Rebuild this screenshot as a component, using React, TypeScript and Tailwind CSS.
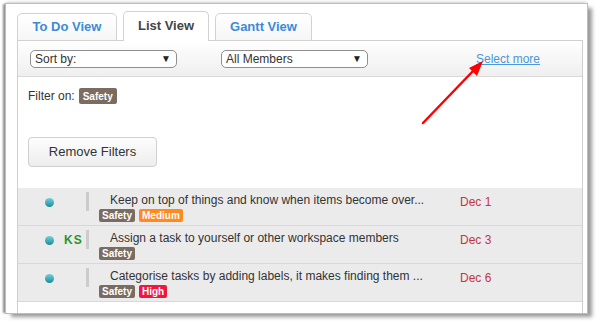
import React from "react";

const font = { fontFamily: '"Liberation Sans", Arial, sans-serif' };

function Badge({ label, color, big }: { label: string; color: string; big?: boolean }) {
  return (
    <span
      className={`inline-flex items-center justify-center rounded-[2px] font-bold text-white text-[10px] ${
        big ? "h-[16px] px-[4px]" : "h-[13px] px-[3px] leading-[13px]"
      } ${color}`}
    >
      {label}
    </span>
  );
}

function Select({ label }: { label: string }) {
  return (
    <div className="flex h-[18px] w-[147px] items-center justify-between rounded-[5px] border border-[#8f8f8f] bg-white pl-[4px] pr-[5px] text-[12px] text-[#333]">
      <span>{label}</span>
      <span className="text-[10px] leading-none text-[#222]">▼</span>
    </div>
  );
}

type Row = {
  text: string;
  who?: string;
  date: string;
  badges: { label: string; color: string }[];
};

const rows: Row[] = [
  {
    text: "Keep on top of things and know when items become over...",
    date: "Dec 1",
    badges: [
      { label: "Safety", color: "bg-[#7b6c62]" },
      { label: "Medium", color: "bg-[#ff8a1f]" },
    ],
  },
  {
    text: "Assign a task to yourself or other workspace members",
    who: "KS",
    date: "Dec 3",
    badges: [{ label: "Safety", color: "bg-[#7b6c62]" }],
  },
  {
    text: "Categorise tasks by adding labels, it makes finding them ...",
    date: "Dec 6",
    badges: [
      { label: "Safety", color: "bg-[#7b6c62]" },
      { label: "High", color: "bg-[#f0163c]" },
    ],
  },
];

export default function App() {
  return (
    <div className="relative h-[322px] w-[600px] overflow-hidden bg-white pl-[6px] pt-[4px]" style={font}>
      <div className="flex h-[309px] w-[581px] flex-col bg-white pl-[11px] pr-[4px] pt-[7px] shadow-[0_0_0_1px_#bdbdbd,-3px_0_2px_#8e8e8e,5px_4px_4px_#999999,0_-2px_3px_#d6d6d6]">
        {/* Tabs */}
        <div className="relative z-10 -mb-px flex items-end gap-[6px]">
          <div className="flex h-[28px] w-[100px] items-center justify-center rounded-t-[5px] border border-[#d2d2d2] bg-linear-to-b from-white to-[#f6f6f6] text-[13px] font-bold text-[#3c8bd8]">
            To Do View
          </div>
          <div className="flex h-[30px] w-[86px] items-center justify-center rounded-t-[5px] border border-b-0 border-[#d2d2d2] bg-white pb-[2px] text-[13px] font-bold text-[#444]">
            List View
          </div>
          <div className="flex h-[28px] w-[97px] items-center justify-center rounded-t-[5px] border border-[#d2d2d2] bg-linear-to-b from-white to-[#f6f6f6] text-[13px] font-bold text-[#3c8bd8]">
            Gantt View
          </div>
        </div>

        {/* Panel */}
        <div className="flex flex-1 flex-col border border-b-0 border-[#cfcfcf] bg-white">
          <div className="flex h-[36px] items-center border-b border-[#d9d9d9] bg-linear-to-b from-white to-[#efefef] pl-[12px]">
            <Select label="Sort by:" />
            <div className="ml-[44px]">
              <Select label="All Members" />
            </div>
            <span className="ml-[108px] text-[12px] text-[#4a97dc] underline">Select more</span>
          </div>

          <div className="flex flex-col pl-[10px] pt-[10px]">
            <div className="flex items-center gap-[4px] text-[12px] text-[#333]">
              <span>Filter on:</span>
              <Badge label="Safety" color="bg-[#7b6c62]" big />
            </div>
            <button className="mt-[32px] flex h-[30px] w-[129px] items-center justify-center rounded-[4px] border border-[#d0d0d0] bg-linear-to-b from-[#fdfdfd] to-[#ededed] text-[13px] text-[#333]">
              Remove Filters
            </button>
          </div>

          <div className="mt-[21px] flex flex-col">
            {rows.map((r, i) => (
              <div key={i} className="flex h-[38px] items-start border-b border-[#d8d8d8] bg-[#ebebeb] pl-[27px]">
                <div className="mt-[10px] h-[9px] w-[9px] rounded-full bg-linear-to-b from-[#6fd2de] to-[#178a9a]" />
                <div className="ml-[10px] mt-[7px] w-[22px] text-[12px] font-bold leading-[15px] tracking-[1px] text-[#2a962f]">
                  {r.who ?? ""}
                </div>
                <div className="mt-[4px] h-[19px] w-[3px] bg-[#cccccc]" />
                <div className="ml-[10px] flex w-[361px] flex-col pt-[5px]">
                  <div className="whitespace-nowrap pl-[11px] text-[12px] leading-[15px] text-[#333]">{r.text}</div>
                  <div className="mt-[1px] flex gap-[4px]">
                    {r.badges.map((b, j) => (
                      <Badge key={j} label={b.label} color={b.color} />
                    ))}
                  </div>
                </div>
                <div className="pt-[7px] text-[12px] leading-[15px] text-[#c4363c]">{r.date}</div>
              </div>
            ))}
          </div>
        </div>
      </div>

      {/* Red annotation arrow */}
      <svg className="pointer-events-none absolute left-0 top-0" width="600" height="322" viewBox="0 0 600 322">
        <line x1="423" y1="123" x2="474" y2="70" stroke="#ff0000" strokeWidth="2.5" strokeLinecap="round" />
        <polygon points="483,61 469,68 477,76" fill="#ff0000" />
      </svg>
    </div>
  );
}
